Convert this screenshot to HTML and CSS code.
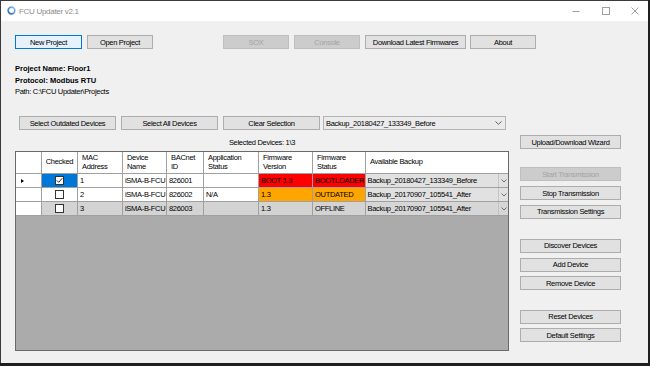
FILE: index.html
```html
<!DOCTYPE html>
<html>
<head>
<meta charset="utf-8">
<title>FCU Updater v2.1</title>
<link rel="stylesheet" href="styles.css">
</head>
<body>
<div class="window">
  <div class="titlebar">
    <svg class="app-icon" viewBox="0 0 10 10">
      <defs>
        <linearGradient id="g" x1="0" y1="1" x2="1" y2="0">
          <stop offset="0" stop-color="#1f5fb0"/>
          <stop offset="1" stop-color="#8ec8f2"/>
        </linearGradient>
      </defs>
      <circle cx="5" cy="5" r="3.7" fill="none" stroke="url(#g)" stroke-width="1.8"/>
    </svg>
    <span class="title">FCU Updater v2.1</span>
    <div class="controls">
      <div class="ctl"><svg width="8" height="8" viewBox="0 0 8 8"><path d="M0.5 4.5H7.5" stroke="#a0a0a0" stroke-width="1"/></svg></div>
      <div class="ctl"><svg width="8" height="8" viewBox="0 0 8 8"><rect x="0.5" y="0.5" width="7" height="7" fill="none" stroke="#a0a0a0" stroke-width="1"/></svg></div>
      <div class="ctl close"><svg width="8" height="8" viewBox="0 0 8 8"><path d="M0.5 0.5L7.5 7.5M7.5 0.5L0.5 7.5" stroke="#a0a0a0" stroke-width="1"/></svg></div>
    </div>
  </div>

  <div class="content">
    <div class="toolbar">
      <button class="btn btn-default w67">New Project</button>
      <button class="btn w66 ml5">Open Project</button>
      <button class="btn disabled w66 ml70">SOX</button>
      <button class="btn disabled w66 ml5">Console</button>
      <button class="btn w101 ml5">Download Latest Firmwares</button>
      <button class="btn w66 ml4">About</button>
    </div>

    <div class="info">
      <div class="bold">Project Name: Floor1</div>
      <div class="bold">Protocol: Modbus RTU</div>
      <div>Path: C:\FCU Updater\Projects</div>
    </div>

    <div class="main">
      <div class="left">
        <div class="sel-row">
          <button class="btn w97">Select Outdated Devices</button>
          <button class="btn w97 ml5">Select All Devices</button>
          <button class="btn w97 ml5">Clear Selection</button>
          <div class="combo">
            <span>Backup_20180427_133349_Before</span>
            <svg class="chev" width="7" height="4" viewBox="0 0 7 4"><path d="M0.5 0.5L3.5 3.3L6.5 0.5" fill="none" stroke="#606060" stroke-width="1"/></svg>
          </div>
        </div>
        <div class="sel-label">Selected Devices: 1\3</div>

        <div class="grid">
          <div class="row head">
            <div class="c rh"></div>
            <div class="c center">Checked</div>
            <div class="c">MAC<br>Address</div>
            <div class="c">Device<br>Name</div>
            <div class="c">BACnet<br>ID</div>
            <div class="c">Application<br>Status</div>
            <div class="c">Firmware<br>Version</div>
            <div class="c">Firmware<br>Status</div>
            <div class="c last hb">Available Backup</div>
          </div>

          <div class="row">
            <div class="c rh"><span class="cur"></span></div>
            <div class="c center sel"><span class="chk"><svg width="7" height="7" viewBox="0 0 7 7"><path d="M0.8 3.4L2.7 5.3L6.3 1.2" fill="none" stroke="#222" stroke-width="1"/></svg></span></div>
            <div class="c">1</div>
            <div class="c">iSMA-B-FCU</div>
            <div class="c">826001</div>
            <div class="c"></div>
            <div class="c red">BOOT 1.3</div>
            <div class="c red">BOOTLOADER</div>
            <div class="c last cb"><span>Backup_20180427_133349_Before</span><span class="dd"><svg width="6" height="4" viewBox="0 0 6 4"><path d="M0.5 0.5L3 3L5.5 0.5" fill="none" stroke="#707070" stroke-width="1"/></svg></span></div>
          </div>

          <div class="row">
            <div class="c rh"></div>
            <div class="c center"><span class="chk"></span></div>
            <div class="c">2</div>
            <div class="c">iSMA-B-FCU</div>
            <div class="c">826002</div>
            <div class="c">N/A</div>
            <div class="c orange">1.3</div>
            <div class="c orange">OUTDATED</div>
            <div class="c last cb"><span>Backup_20170907_105541_After</span><span class="dd"><svg width="6" height="4" viewBox="0 0 6 4"><path d="M0.5 0.5L3 3L5.5 0.5" fill="none" stroke="#707070" stroke-width="1"/></svg></span></div>
          </div>

          <div class="row gray">
            <div class="c rh"></div>
            <div class="c center"><span class="chk"></span></div>
            <div class="c">3</div>
            <div class="c">iSMA-B-FCU</div>
            <div class="c">826003</div>
            <div class="c"></div>
            <div class="c">1.3</div>
            <div class="c">OFFLINE</div>
            <div class="c last cb"><span>Backup_20170907_105541_After</span><span class="dd"><svg width="6" height="4" viewBox="0 0 6 4"><path d="M0.5 0.5L3 3L5.5 0.5" fill="none" stroke="#707070" stroke-width="1"/></svg></span></div>
          </div>
        </div>
      </div>

      <div class="right">
        <button class="btn wr mt19">Upload/Download Wizard</button>
        <button class="btn wr disabled mt18">Start Transmission</button>
        <button class="btn wr mt5">Stop Transmission</button>
        <button class="btn wr mt45">Transmission Settings</button>
        <button class="btn wr mt20">Discover Devices</button>
        <button class="btn wr mt5">Add Device</button>
        <button class="btn wr mt45">Remove Device</button>
        <button class="btn wr mt195">Reset Devices</button>
        <button class="btn wr mt45">Default Settings</button>
      </div>
    </div>
  </div>
</div>
</body>
</html>
```

FILE: styles.css
```css
* { box-sizing: border-box; margin: 0; padding: 0; }
html, body { width: 650px; height: 366px; overflow: hidden; }
body {
  background: #1f1f1f;
  font-family: "Liberation Sans", Arial, sans-serif;
  font-size: 7.5px;
  letter-spacing: -0.3px;
  color: #000;
}
.window {
  width: 648px;
  height: 363px;
  border-left: 1px solid #3a3a3a;
  border-top: 1px solid #3a3a3a;
  background: #f0f0f0;
  display: flex;
  flex-direction: column;
}
.titlebar {
  height: 20px;
  flex: none;
  background: #fff;
  display: flex;
  align-items: center;
}
.app-icon { width: 9px; height: 9px; margin-left: 6px; margin-top: -1px; }
.title { margin-left: 3px; font-size: 8px; color: #8c8c8c; }
.controls { margin-left: auto; display: flex; height: 100%; }
.ctl { width: 30px; display: flex; align-items: center; justify-content: center; }
.ctl.close { width: 27px; }

.content { flex: 1; padding-left: 14px; }

.btn {
  height: 14px;
  border: 1px solid #adadad;
  background: #e1e1e1;
  display: flex;
  align-items: center;
  justify-content: center;
  white-space: nowrap;
  color: #000;
  font: inherit;
  letter-spacing: inherit;
  padding: 0;
  flex: none;
}
.btn-default { border-color: #0078d7; background: #e5f1fb; }
.btn.disabled { background: #cccccc; border-color: #bfbfbf; color: #a3a3a3; }

.w67 { width: 67px; }
.w66 { width: 66px; }
.w97 { width: 97px; }
.w101 { width: 101px; }
.wr { width: 101px; }
.ml4 { margin-left: 4px; }
.ml5 { margin-left: 5px; }
.ml70 { margin-left: 70px; }

.toolbar { display: flex; margin-top: 14px; }

.info { margin-top: 14px; line-height: 11.5px; }
.bold { font-weight: bold; letter-spacing: 0; }

.main { display: flex; margin-top: 18.5px; }
.left { width: 494px; flex: none; }
.right { width: 101px; margin-left: 11px; display: flex; flex-direction: column; }

.sel-row { display: flex; margin-left: 4px; height: 14px; }
.combo {
  width: 183px;
  height: 14px;
  margin-left: 3px;
  border: 1px solid #b4b4b4;
  background: #ebebeb;
  display: flex;
  align-items: center;
  justify-content: space-between;
  padding: 0 3px 0 2px;
  white-space: nowrap;
}
.sel-label { margin-top: 7px; height: 12px; line-height: 12px; text-align: center; }

.grid {
  margin-top: 2px;
  width: 494px;
  height: 200px;
  border: 1px solid #6a6a6a;
  background: #ababab;
}
.row {
  display: grid;
  grid-template-columns: 26px 36px 45px 44px 37px 55px 54px 53px 142px;
  height: 14px;
  background: #fff;
}
.row.head { height: 22px; line-height: 8.5px; }
.c {
  border-right: 1px solid #a0a0a0;
  border-bottom: 1px solid #a0a0a0;
  display: flex;
  align-items: center;
  padding-left: 2px;
  overflow: hidden;
  white-space: nowrap;
}
.head .c { padding-left: 4px; }
.head .c.center { padding-left: 0; }
.head .hb { padding-left: 4px; }
.c.last { border-right: none; }
.center { justify-content: center; padding-left: 0; }
.rh { background: #fff; padding-left: 5px; }
.row.gray { background: #d3d3d3; }
.sel { background: #0078d7; }
.red { background: #ff0000; }
.orange { background: #ffa500; }

.cur {
  width: 0; height: 0;
  border-left: 3px solid #000;
  border-top: 2.5px solid transparent;
  border-bottom: 2.5px solid transparent;
}
.chk {
  width: 9px; height: 9px;
  border: 1px solid #333;
  background: #fff;
  display: flex;
  align-items: center;
  justify-content: center;
}
.cb {
  background: #e1e1e1;
  padding-left: 1.5px;
  justify-content: space-between;
}
.row.gray .cb { background: #d6d6d6; }
.dd {
  width: 10px;
  height: 100%;
  border-left: 1px solid #c4c4c4;
  display: flex;
  align-items: center;
  justify-content: center;
}

.mt5 { margin-top: 5px; }
.mt45 { margin-top: 4.5px; }
.mt18 { margin-top: 18px; }
.mt19 { margin-top: 19px; }
.mt195 { margin-top: 19.5px; }
.mt20 { margin-top: 20px; }
```
